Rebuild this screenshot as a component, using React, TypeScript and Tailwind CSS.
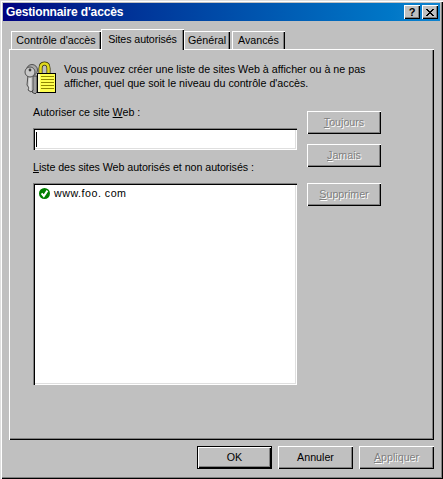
import React from "react";

const raised = "shadow-[inset_1px_1px_0_#fff,inset_-1px_-1px_0_#000,inset_-2px_-2px_0_#808080]";

function Btn({ children, disabled, isDefault, w = "w-[74px]" }: { children: React.ReactNode; disabled?: boolean; isDefault?: boolean; w?: string }) {
  return (
    <div className={`${w} h-[23px] shrink-0 flex items-center justify-center pb-px bg-[#c0c0c0] ${isDefault ? "shadow-[inset_0_0_0_1px_#000,inset_2px_2px_0_#fff,inset_-2px_-2px_0_#000,inset_-3px_-3px_0_#808080]" : raised} ${disabled ? "text-[#808080] [text-shadow:1px_1px_0_#fff]" : "text-black"}`}>
      <span>{children}</span>
    </div>
  );
}

function Tab({ children, active, cls }: { children: React.ReactNode; active?: boolean; cls: string }) {
  return (
    <div className={`${cls} flex items-center justify-center bg-[#c0c0c0] shadow-[inset_1px_1px_0_#fff,inset_-1px_0_0_#000,inset_-2px_0_0_#808080] ${active ? "h-[21px] -mb-px z-10 relative pb-[2px]" : "h-[18px]"}`}>
      {children}
    </div>
  );
}

function LockIcon() {
  return (
    <svg width="34" height="34" viewBox="0 0 34 34" className="shrink-0">
      {/* keys */}
      <path d="M9 16 L8 27 L10 30 L9 32 L12 34 L14 32 L14 16 Z" fill="#a0a0a0" stroke="#404040" strokeWidth="1" />
      <path d="M5 15 L4 25 L6 28 L5 30 L8 32 L10 30 L10 15 Z" fill="#c8c8c8" stroke="#505050" strokeWidth="1" />
      <circle cx="9" cy="10" r="5.5" fill="#a8a8a8" stroke="#505050" />
      <circle cx="7" cy="12" r="5" fill="#c8c8c8" stroke="#505050" />
      <circle cx="7" cy="10" r="1.4" fill="#404040" />
      <path d="M7 18V30" stroke="#f0f0f0" strokeWidth="1" />
      {/* shackle */}
      <path d="M17.5 14V8.5Q17.5 3.5 21.5 3.5Q25.5 3.5 25.5 8.5V14" fill="none" stroke="#302c00" strokeWidth="4" />
      <path d="M17.5 14V8.5Q17.5 3.5 21.5 3.5Q25.5 3.5 25.5 8.5V14" fill="none" stroke="#e0d820" strokeWidth="2.6" />
      {/* body */}
      <g shapeRendering="crispEdges">
        <rect x="14.5" y="13.5" width="18" height="19" fill="#ffff50" stroke="#000" />
        <rect x="15" y="14" width="2" height="18" fill="#ffffc0" />
        <rect x="18" y="16" width="13" height="1" fill="#908800" />
        <rect x="18" y="19" width="13" height="1" fill="#908800" />
        <rect x="18" y="22" width="13" height="1" fill="#908800" />
        <rect x="18" y="25" width="13" height="1" fill="#908800" />
        <rect x="18" y="28" width="13" height="1" fill="#908800" />
      </g>
    </svg>
  );
}

function CheckIcon() {
  return (
    <svg width="11" height="11" viewBox="0 0 11 11" className="shrink-0 mt-px">
      <circle cx="5.5" cy="5.5" r="5.5" fill="#008000" />
      <path d="M2.6 5.4 L4.8 8 L8.4 2.6" fill="none" stroke="#fff" strokeWidth="2" />
    </svg>
  );
}

export default function App() {
  return (
    <div className="w-[443px] h-[479px] bg-[#c0c0c0] flex flex-col p-[3px] text-[10.7px] leading-[14px] text-black shadow-[inset_1px_1px_0_#dfdfdf,inset_2px_2px_0_#fff,inset_-1px_-1px_0_#000,inset_-2px_-2px_0_#808080] [font-family:'Liberation_Sans',Arial,sans-serif]">
      {/* title bar */}
      <div className="h-[18px] flex items-center justify-between pl-[3px] pr-[2px] bg-gradient-to-r from-[#000080] to-[#1084d0]">
        <span className="text-white font-bold text-[12px] tracking-[-0.15px]">Gestionnaire d'accès</span>
        <div className="flex gap-[2px]">
          <div className={`w-4 h-[14px] bg-[#c0c0c0] flex items-center justify-center font-bold text-[11px] leading-none ${raised}`}>?</div>
          <div className={`w-4 h-[14px] bg-[#c0c0c0] flex items-center justify-center ${raised}`}>
            <svg width="8" height="7" viewBox="0 0 8 7" shapeRendering="crispEdges">
              <path d="M0 0h2v1h1v1h2V1h1V0h2v1H7v1H6v1H5v1h1v1h1v1h1v1H6V6H5V5H3v1H2v1H0V6h1V5h1V4h1V3H2V2H1V1H0z" fill="#000" />
            </svg>
          </div>
        </div>
      </div>

      {/* body */}
      <div className="flex-1 flex flex-col px-[6px]">
        <div className="flex items-end h-[28px] pl-[2px]">
          <Tab cls="w-[90px]">Contrôle d'accès</Tab>
          <Tab cls="w-[83px] tracking-[-0.1px]" active>Sites autorisés</Tab>
          <Tab cls="w-[46px]">Général</Tab>
          <Tab cls="w-[53px] ml-[2px]">Avancés</Tab>
        </div>

        {/* panel */}
        <div className="w-[425px] h-[391px] shrink-0 pt-[11px] pl-[14px] shadow-[inset_1px_1px_0_#fff,inset_-1px_-1px_0_#000,inset_-2px_-2px_0_#808080]">
          <div className="flex h-[45px]">
            <LockIcon />
            <p className="ml-[7px] mt-[2px] whitespace-nowrap">
              Vous pouvez créer une liste de sites Web à afficher ou à ne pas<br />
              afficher, quel que soit le niveau du contrôle d'accès.
            </p>
          </div>

          <div className="flex pl-[10px]">
            <div className="w-[264px] flex flex-col">
              <div className="h-[14px]">Autoriser ce site <span className="underline">W</span>eb :</div>
              <div className="mt-[9px] h-[22px] bg-white flex items-center pl-[3px] shadow-[inset_1px_1px_0_#808080,inset_2px_2px_0_#000,inset_-1px_-1px_0_#fff,inset_-2px_-2px_0_#dfdfdf]">
                <div className="w-px h-[15px] bg-black" />
              </div>
              <div className="mt-[10px] h-[14px] tracking-[-0.06px]"><span className="underline">L</span>iste des sites Web autorisés et non autorisés :</div>
              <div className="mt-[9px] h-[202px] bg-white pt-[3px] pl-[6px] shadow-[inset_1px_1px_0_#808080,inset_2px_2px_0_#000,inset_-1px_-1px_0_#fff,inset_-2px_-2px_0_#dfdfdf]">
                <div className="flex items-center gap-[4px]">
                  <CheckIcon />
                  <span className="tracking-[0.5px]">www.foo. com</span>
                </div>
              </div>
            </div>
            <div className="ml-[10px] pt-[6px] flex flex-col">
              <Btn disabled><span className="underline">T</span>oujours</Btn>
              <div className="mt-[10px]"><Btn disabled><span className="underline">J</span>amais</Btn></div>
              <div className="mt-[16px]"><Btn disabled><span className="underline">S</span>upprimer</Btn></div>
            </div>
          </div>
        </div>

        {/* footer */}
        <div className="flex justify-end gap-[6px] pt-[6px] w-[425px]">
          <Btn isDefault w="w-[75px]">OK</Btn>
          <Btn w="w-[75px]">Annuler</Btn>
          <Btn disabled w="w-[75px]"><span className="underline">A</span>ppliquer</Btn>
        </div>
      </div>
    </div>
  );
}
